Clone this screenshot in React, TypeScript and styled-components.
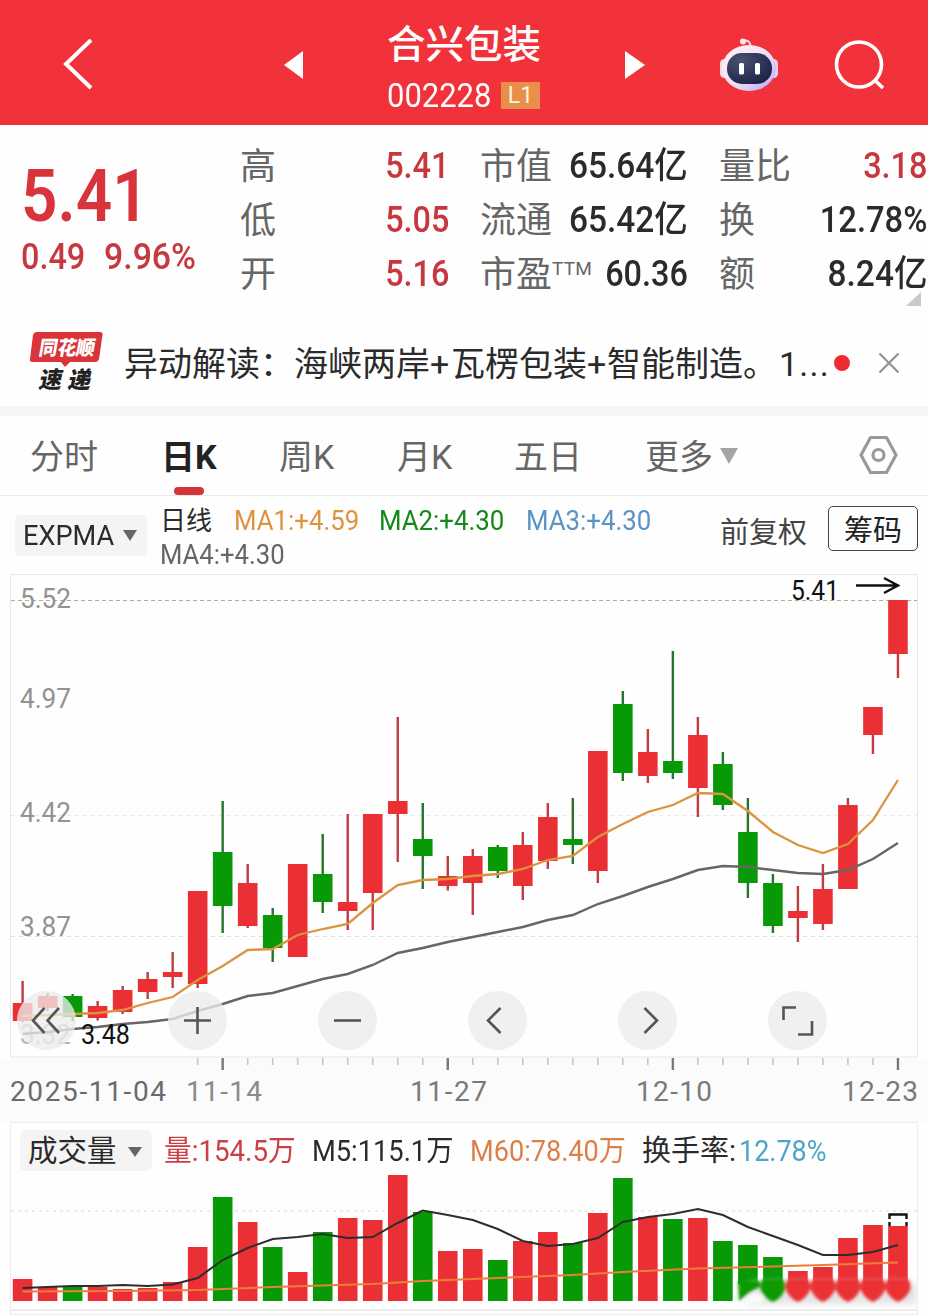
import React from 'react';
import styled, { createGlobalStyle } from 'styled-components';

const FONT = `Roboto, "Noto Sans CJK SC", sans-serif`;
const RED = '#ea3035';
const GREEN = '#079a06';

const Global = createGlobalStyle`
  * { box-sizing: border-box; }
  html, body { margin: 0; padding: 0; background: #fefefe; }
  body { font-family: ${FONT}; width: 928px; overflow: hidden; }
  svg { display: block; flex: none; }
`;

const Page = styled.main`
  width: 928px;
  height: 1315px;
  overflow: hidden;
  display: flex;
  flex-direction: column;
  background: #fefefe;
`;

/* Text set slightly condensed, the way the quote digits are drawn. */
const Txt = styled.span<{ $size: number; $color?: string; $weight?: number; $sx?: number; $right?: boolean }>`
  display: inline-block;
  white-space: pre;
  font-size: ${p => p.$size}px;
  line-height: 1;
  font-weight: ${p => p.$weight ?? 400};
  color: ${p => p.$color ?? '#2b2b2b'};
  transform: scaleX(${p => p.$sx ?? 1});
  transform-origin: ${p => (p.$right ? 'right' : 'left')} center;
`;

/* ---------- header ---------- */
const Header = styled.header`
  height: 125px;
  flex: none;
  background: #f1323a;
  display: flex;
  align-items: center;
  padding: 5px 43px 0 62px;
`;
const TitleBlock = styled.div`
  width: 156px;
  flex: none;
  margin: 0 82px 0 83px;
  height: 92px;
  display: flex;
  flex-direction: column;
`;
const Name = styled.h1`
  margin: 0;
  font-size: 38.5px;
  line-height: 52px;
  font-weight: 500;
  color: #fff;
  white-space: nowrap;
  flex: none;
`;
const CodeRow = styled.div`
  display: flex;
  flex: none;
  align-items: center;
  height: 48px;
  width: 153px;
  justify-content: space-between;
`;
const CodeBox = styled.div`
  width: 105px;
`;
const Level = styled.span`
  width: 39px;
  height: 27px;
  background: #e8904b;
  color: #fff3d8;
  font-size: 23px;
  line-height: 27px;
  text-align: center;
`;
const Spacer = styled.div<{ $w: number }>`
  width: ${p => p.$w}px;
  flex: none;
`;

/* ---------- quote ---------- */
const Quote = styled.section`
  height: 195px;
  flex: none;
  display: grid;
  grid-template-columns: 240px 209px 239px 239px;
  padding-top: 14px;
  position: relative;
`;
const PriceBlock = styled.div`
  padding: 21px 0 0 21px;
  display: flex;
  flex-direction: column;
  gap: 6px;
`;
const ChangeRow = styled.div`
  display: grid;
  grid-template-columns: 83px 100px;
`;
const Col = styled.div<{ $gap?: number }>`
  padding-left: ${p => p.$gap ?? 0}px;
`;
const Stat = styled.div`
  height: 54px;
  display: flex;
  align-items: center;
  justify-content: space-between;
`;
const Label = styled.span`
  padding-top: 2px;
  font-size: 36px;
  line-height: 52px;
  color: #666;
  font-weight: 400;
  white-space: nowrap;
  display: flex;
`;
const Ttm = styled.span`
  font-size: 19px;
  line-height: 40px;
  letter-spacing: 0.2px;
`;
const Corner = styled.div`
  position: absolute;
  right: 7px;
  top: 167px;
  border-left: 15px solid transparent;
  border-bottom: 14px solid #c9c9c9;
`;

/* ---------- news ---------- */
const News = styled.section`
  height: 86px;
  flex: none;
  display: flex;
  align-items: center;
  padding-left: 28px;
`;
const NewsText = styled.div`
  width: 708px;
  margin-left: 20px;
  padding-top: 1px;
  font-size: 34px;
  line-height: 48px;
  color: #2b2b2b;
  white-space: nowrap;
  display: flex;
`;
const NewsPart = styled.span<{ $w: number; $ls?: number }>`
  width: ${p => p.$w}px;
  flex: none;
  letter-spacing: ${p => p.$ls ?? 0}px;
`;
const Dot = styled.i`
  width: 16px;
  height: 16px;
  border-radius: 50%;
  background: #ee2b32;
  margin: 0 28px 0 2px;
`;
const Band = styled.div`
  height: 10px;
  flex: none;
  background: #f6f6f6;
`;

/* ---------- tabs ---------- */
const Tabs = styled.nav`
  height: 80px;
  flex: none;
  display: flex;
  border-bottom: 1px solid #e9e9e9;
  padding-left: 30px;
`;
const Tab = styled.div<{ $w: number; $on?: boolean }>`
  width: ${p => p.$w}px;
  flex: none;
  font-size: 34px;
  line-height: 83px;
  color: ${p => (p.$on ? '#222' : '#666')};
  font-weight: ${p => (p.$on ? 700 : 400)};
  display: flex;
  position: relative;
`;
const Underline = styled.i`
  position: absolute;
  left: 13px;
  top: 71px;
  width: 30px;
  height: 8px;
  border-radius: 4px;
  background: #d5333a;
`;
const Triangle = styled.i<{ $s: number; $h: number; $color: string }>`
  border-left: ${p => p.$s}px solid transparent;
  border-right: ${p => p.$s}px solid transparent;
  border-top: ${p => p.$h}px solid ${p => p.$color};
`;
const TabTriangle = styled(Triangle)`
  margin: 32px 0 0 7px;
  align-self: flex-start;
`;
const GearWrap = styled.div`
  padding-top: 19px;
`;

/* ---------- indicators ---------- */
const Indicators = styled.section`
  height: 78px;
  flex: none;
  display: flex;
  padding-left: 15px;
`;
const Picker = styled.div<{ $w: number; $h: number; $pad?: number }>`
  width: ${p => p.$w}px;
  height: ${p => p.$h}px;
  flex: none;
  border-radius: 5px;
  background: #f4f4f4;
  display: flex;
  align-items: center;
  justify-content: space-between;
  padding: ${p => p.$pad ?? 0}px 10px 0 8px;
`;
const PickerSlot = styled.div`
  padding-top: 19px;
  width: 145px;
`;
const MaLines = styled.div`
  width: 560px;
  padding-top: 8px;
`;
const MaRow = styled.div`
  height: 34px;
  display: grid;
  grid-template-columns: 74px 145px 147px 150px;
  align-items: center;
`;
const Adjust = styled.div`
  width: 108px;
  padding-top: 14px;
  font-size: 29px;
  line-height: 46px;
  color: #444;
  white-space: nowrap;
`;
const ChipsButton = styled.div`
  width: 90px;
  height: 45px;
  margin-top: 10px;
  border: 1px solid #444;
  border-radius: 5px;
  font-size: 29px;
  line-height: 48px;
  text-align: center;
  color: #222;
`;

/* ---------- charts ---------- */
const ChartArea = styled.section`
  position: relative;
  flex: none;
  height: 548px;
`;
const RoundButton = styled.div<{ $x: number }>`
  position: absolute;
  left: ${p => p.$x - 29.5}px;
  top: 417px;
  width: 59px;
  height: 59px;
  border-radius: 50%;
  background: rgba(236, 236, 236, 0.78);
`;
const VolumePanel = styled.section`
  height: 188px;
  flex: none;
  margin: 0 10px;
  border: 1px solid #ececec;
`;
const VolumeHead = styled.div`
  height: 52px;
  padding: 7px 0 0 9px;
  display: flex;
`;
const VolumeValues = styled.div`
  display: grid;
  grid-template-columns: 148px 158px 172px 97px 100px;
  height: 43px;
  align-items: center;
  padding-left: 12px;
`;
const NextPanel = styled.div`
  height: 8px;
  margin: 0 10px;
  border: 1px solid #ececec;
`;

const X0 = 22.6;
const STEP = 25.01;
const cx = (i: number) => X0 + STEP * i;

/* rise flag, body top, body bottom, high, low */
const candles: [number, number, number, number, number][] = [
  [1, 1003, 1021, 981, 1022], [1, 996, 1008, 993, 1011], [0, 996, 1017, 994, 1021], [1, 1006, 1018, 1001, 1020.5],
  [1, 990, 1012, 986, 1014], [1, 979, 992, 972, 999], [1, 972, 977, 952, 988], [1, 891, 984, 891, 988],
  [0, 852, 906, 801, 933], [1, 883, 926, 864, 928], [0, 915, 948, 908, 962], [1, 864, 957, 864, 957],
  [0, 874, 902, 834, 913], [1, 902, 911, 814, 930], [1, 814, 893, 814, 930], [1, 801, 814, 717, 862],
  [0, 839, 856, 803, 889], [1, 876, 886, 856, 890.5], [1, 856, 883, 849, 915], [0, 847, 871, 845, 878],
  [1, 845, 886, 832, 900], [1, 817, 861, 803, 869], [0, 839, 845, 798, 864], [1, 751, 871, 751, 883],
  [0, 704, 773, 691, 781], [1, 752, 776, 729, 783], [0, 761, 773, 651, 779], [1, 735, 788, 717, 817],
  [0, 764, 805, 752, 810], [0, 832, 883, 798, 898], [0, 883, 926, 874, 933], [1, 911, 918, 886, 942],
  [1, 889, 924, 864, 930], [1, 805, 889, 798, 889], [1, 707, 735, 707, 754], [1, 600, 654, 600, 678],
];
const fast = [1016, 1015, 1014, 1013, 1010, 1003, 997, 980, 966, 950, 949, 935, 929, 924, 903, 885, 880, 879, 876, 874, 869, 860, 856, 837, 824, 812, 805, 793, 794, 811, 832, 845, 853, 844, 820, 780];
const slow = [1034, 1032, 1029, 1027, 1024, 1022, 1019, 1011, 1004, 996, 993, 986, 979, 974, 965, 953, 948, 942, 937, 932, 927, 920, 915, 904, 896, 887, 879, 870, 866, 867, 870, 873, 874, 870, 859, 843];
const volumes = [1279, 1287, 1287, 1287, 1289, 1288, 1282, 1247, 1197, 1222, 1247, 1272, 1232, 1218, 1220, 1175, 1212, 1251, 1249, 1260, 1241, 1232, 1243, 1213, 1178, 1217, 1219, 1218, 1241, 1245, 1257, 1271, 1267, 1238, 1225, 1226];
const m5 = [1288, 1287, 1286, 1286, 1285, 1286, 1284.5, 1278, 1260, 1248, 1239, 1237, 1234, 1238, 1237, 1223, 1210.5, 1215, 1220, 1229, 1241, 1246, 1244, 1238, 1222, 1217, 1214, 1209, 1215, 1227, 1236, 1245, 1255, 1255, 1252, 1245];
const m60: [number, number][] = [[0, 1291.5], [4, 1291], [7, 1290], [10, 1287], [14, 1284], [16, 1281], [18, 1279], [22, 1275], [24, 1272], [27, 1268.5], [32, 1265], [35, 1262.5]];

const line = (ys: number[]) => ys.map((y, i) => `${cx(i)},${y}`).join(' ');

const priceTicks: [string, number, string][] = [
  ['5.52', 608, '#929292'], ['4.97', 708, '#929292'], ['4.42', 822, '#929292'], ['3.87', 936, '#929292'], ['3.32', 1044, '#b4b4b4'],
];
const dateTicks: [string, number, number, string][] = [
  ['2025-11-04', 10, 156, '#6b6b6b'], ['11-14', 186, 76, '#8a8a8a'], ['11-27', 410, 77, '#7a7a7a'],
  ['12-10', 636, 76, '#7a7a7a'], ['12-23', 842, 76, '#7a7a7a'],
];

const KLine = () => (
  <svg width="928" height="548" viewBox="0 574 928 548" fontFamily={FONT}>
    <rect x="0" y="1058" width="928" height="64" fill="#fbfbfb" />
    <path d="M10.5 1057V574.5H917.5V1057Z" fill="#fefefe" stroke="#e6e6e6" />
    <g stroke="#dedede" strokeDasharray="4 4">
      <path d="M11 815.5H917" stroke="#ebebeb" />
      <path d="M11 936.5H917" />
    </g>
    <path d="M11 600.5H917" stroke="#b3ad8a" strokeDasharray="4 3" />
    {priceTicks.map(([t, y, c]) => (
      <text key={t} x="20" y={y} fontSize="28" fill={c} textLength="51" lengthAdjust="spacingAndGlyphs">{t}</text>
    ))}
    {candles.map(([up, a, b, h, l], i) => (
      <g key={i}>
        <rect x={cx(i) - 1.2} y={h} width="2.4" height={l - h} fill={up ? '#bf3c40' : '#25762a'} />
        <rect x={cx(i) - 9.8} y={a} width="19.6" height={b - a} fill={up ? RED : GREEN} />
      </g>
    ))}
    <polyline points={line(slow)} fill="none" stroke="#666" strokeWidth="2.4" />
    <polyline points={line(fast)} fill="none" stroke="#dd923f" strokeWidth="2.3" />
    <text x="81" y="1044" fontSize="27" fill="#111" textLength="49" lengthAdjust="spacingAndGlyphs">3.48</text>
    <text x="791" y="600" fontSize="27" fill="#111" textLength="48" lengthAdjust="spacingAndGlyphs">5.41</text>
    <path d="M856 585.5H897M884 578L898 585.5L884 593" fill="none" stroke="#111" strokeWidth="2.4" />
    {Array.from({ length: 29 }, (_, k) => k + 7).map(i => {
      const major = i === 8 || i === 17 || i === 26 || i === 35;
      return <path key={i} d={`M${cx(i)} 1058V${major ? 1070 : 1065}`} stroke={major ? '#777' : '#c6c6c6'} strokeWidth={major ? 2.4 : 1.6} />;
    })}
    {dateTicks.map(([t, x, w, c]) => (
      <text key={t} x={x} y="1101" fontSize="28" fill={c} textLength={w} lengthAdjust="spacing">{t}</text>
    ))}
  </svg>
);

const controls: [number, string][] = [
  [46.5, 'M27.5 17L16 29.5L27.5 42M42 17L30.5 29.5L42 42'],
  [197.5, 'M16 29.5H43M29.5 16V43'],
  [347.5, 'M16 29.5H43'],
  [497.5, 'M32.5 17L20 29.5L32.5 42'],
  [647.5, 'M26.5 17L39 29.5L26.5 42'],
  [797.5, 'M15.5 29V16.5H28M44 30V43.5H30'],
];

const VolumeChart = () => (
  <svg width="906" height="134" viewBox="11 1175 906 134">
    <defs>
      <filter id="soft" x="-20%" y="-60%" width="140%" height="220%"><feGaussianBlur stdDeviation="3" /></filter>
      <filter id="softer" x="-20%" y="-60%" width="140%" height="220%"><feGaussianBlur stdDeviation="1.6" /></filter>
    </defs>
    <path d="M11 1211H917" stroke="#dcdcdc" strokeDasharray="3 4" />
    {volumes.map((y, i) => (
      <rect key={i} x={cx(i) - 9.8} y={y} width="19.6" height={(i > 28 ? 1284 : 1301) - y} fill={candles[i][0] ? RED : GREEN} />
    ))}
    <path d="M742 1292Q746 1284 756 1282H916V1304H750Q742 1302 742 1292Z" fill="#e4e4e4" filter="url(#soft)" />
    <g filter="url(#softer)">
      <path d="M738 1281H760V1287Q752 1290 744 1297L739 1301Z" fill={GREEN} />
      {[30, 31, 32, 33, 34, 35].map(i => (
        <path key={i} d={`M${cx(i) - 10} 1279H${cx(i) + 10}L${cx(i) + 12.5} 1284V1289Q${cx(i) + 9} 1298 ${cx(i)} 1302Q${cx(i) - 9} 1298 ${cx(i) - 12.5} 1289V1284Z`} fill={candles[i][0] ? RED : GREEN} />
      ))}
      <path d="M743 1302Q752 1287 764 1298L759 1304H746Z" fill="#fafafa" />
    </g>
    <polyline points={m60.map(([i, y]) => `${cx(i)},${y}`).join(' ')} fill="none" stroke="#ee7d3c" strokeWidth="2" />
    <polyline points={line(m5)} fill="none" stroke="#2d2d2d" strokeWidth="2" />
    <path d="M889.5 1219V1214.5H906.5V1219M889.5 1222V1226M906.5 1222V1226" fill="none" stroke="#111" strokeWidth="2.4" />
  </svg>
);

const Robot = () => (
  <svg width="60" height="56" viewBox="0 0 60 56">
    <defs>
      <linearGradient id="shell" x1="0" y1="0" x2="1" y2="1">
        <stop offset="0" stopColor="#fff2f5" />
        <stop offset="0.55" stopColor="#f3def4" />
        <stop offset="1" stopColor="#a9a4f5" />
      </linearGradient>
      <radialGradient id="visor" cx="0.3" cy="0.25" r="0.9">
        <stop offset="0" stopColor="#49506f" />
        <stop offset="1" stopColor="#182046" />
      </radialGradient>
    </defs>
    <path d="M23 4.500Q31 1 32 11" fill="none" stroke="#f7d9dc" strokeWidth="2" />
    <circle cx="24" cy="4.500" r="3" fill="#fde8e8" />
    <rect x="1" y="22" width="9" height="19" rx="4.5" fill="#f6dce7" />
    <rect x="50" y="22" width="9" height="19" rx="4.5" fill="#e5cdf3" />
    <ellipse cx="30" cy="31" rx="27" ry="23" fill="url(#shell)" />
    <rect x="8" y="16" width="45" height="31" rx="15" fill="url(#visor)" />
    <rect x="20" y="26" width="5" height="11.5" rx="1.5" fill="#fff" />
    <rect x="36" y="26" width="5" height="11.5" rx="1.5" fill="#fff" />
  </svg>
);

const Logo = () => (
  <svg width="76" height="62" viewBox="0 0 76 62" fontFamily={FONT} fontWeight="900">
    <path d="M9 0H72Q75 0 74.5 3L71 27Q70 30 67 30H42L37 35L33 30H5Q1 30 2 27L5 3Q6 0 9 0Z" fill="#d8343a" />
    <text x="0" y="0" transform="translate(10 23) skewX(-10)" fontSize="20" fill="#fff" textLength="56" lengthAdjust="spacingAndGlyphs">同花顺</text>
    <text x="0" y="0" transform="translate(10 56) skewX(-12)" fontSize="23" fill="#222" textLength="52">速递</text>
  </svg>
);

const App = () => (
  <Page>
    <Global />
    <Header>
      <svg width="32" height="52" viewBox="0 0 32 52"><path d="M29 1L4 25L29 49" fill="none" stroke="#fff" strokeWidth="4" /></svg>
      <Spacer $w={190} />
      <svg width="20" height="28" viewBox="0 0 20 28"><path d="M19 0V28L0 14Z" fill="#fff" /></svg>
      <TitleBlock>
        <Name>合兴包装</Name>
        <CodeRow>
          <CodeBox><Txt $size={34} $color="#fff" $sx={0.91} $weight={450}>002228</Txt></CodeBox>
          <Level>L1</Level>
        </CodeRow>
      </TitleBlock>
      <svg width="20" height="28" viewBox="0 0 20 28"><path d="M0 0V28L20 14Z" fill="#fff" /></svg>
      <Spacer $w={74} />
      <Robot />
      <Spacer $w={54} />
      <svg width="52" height="52" viewBox="0 0 52 52" fill="none" stroke="#fff" strokeWidth="3.6"><circle cx="26" cy="25.5" r="22.5" /><path d="M41.5 41L50 49" /></svg>
    </Header>

    <Quote>
      <PriceBlock>
        <Txt $size={73} $color="#d9343b" $weight={600} $sx={0.875}>5.41</Txt>
        <ChangeRow>
          <Txt $size={36} $color="#c5393f" $sx={0.9} $weight={500}>0.49</Txt>
          <Txt $size={36} $color="#c5393f" $sx={0.94} $weight={500}>9.96%</Txt>
        </ChangeRow>
      </PriceBlock>
      <Col>
        {[['高', '5.41'], ['低', '5.05'], ['开', '5.16']].map(([l, v]) => (
          <Stat key={l}><Label>{l}</Label><Txt $size={36} $color="#c8373d" $weight={500} $sx={0.9} $right>{v}</Txt></Stat>
        ))}
      </Col>
      <Col $gap={31}>
        <Stat><Label>市值</Label><Txt $size={36} $weight={500} $sx={0.93} $right>65.64亿</Txt></Stat>
        <Stat><Label>流通</Label><Txt $size={36} $weight={500} $sx={0.93} $right>65.42亿</Txt></Stat>
        <Stat><Label>市盈<Ttm>TTM</Ttm></Label><Txt $size={36} $weight={500} $sx={0.9} $right>60.36</Txt></Stat>
      </Col>
      <Col $gap={31}>
        <Stat><Label>量比</Label><Txt $size={36} $color="#c8373d" $weight={500} $sx={0.9} $right>3.18</Txt></Stat>
        <Stat><Label>换</Label><Txt $size={36} $weight={500} $sx={0.91} $right>12.78%</Txt></Stat>
        <Stat><Label>额</Label><Txt $size={36} $weight={500} $sx={0.93} $right>8.24亿</Txt></Stat>
      </Col>
      <Corner />
    </Quote>

    <News>
      <Logo />
      <NewsText>
        <NewsPart $w={170}>异动解读：</NewsPart>
        <NewsPart $w={157}>海峡两岸+</NewsPart>
        <NewsPart $w={156}>瓦楞包装+</NewsPart>
        <NewsPart $w={172}>智能制造。</NewsPart>
        <NewsPart $w={53} $ls={1.2}>1...</NewsPart>
      </NewsText>
      <Dot />
      <svg width="22" height="22" viewBox="0 0 22 22"><path d="M1.5 1.5L20.5 20.5M20.5 1.5L1.5 20.5" stroke="#929292" strokeWidth="2.2" /></svg>
    </News>
    <Band />

    <Tabs>
      <Tab $w={131}>分时</Tab>
      <Tab $w={118} $on>日K<Underline /></Tab>
      <Tab $w={118}>周K</Tab>
      <Tab $w={117}>月K</Tab>
      <Tab $w={131}>五日</Tab>
      <Tab $w={213}>更多<TabTriangle $s={9} $h={16} $color="#a5a5a5" /></Tab>
      <GearWrap>
        <svg width="41" height="40" viewBox="0 0 41 40" fill="none" stroke="#999" strokeWidth="3.2">
          <path d="M12.5 2.5H28.5L38 20L28.5 37.5H12.5L3 20Z" strokeLinejoin="round" /><circle cx="20.5" cy="20" r="5.5" />
        </svg>
      </GearWrap>
    </Tabs>

    <Indicators>
      <PickerSlot>
        <Picker $w={132} $h={41}>
          <Txt $size={28} $sx={0.97}>EXPMA</Txt>
          <Triangle $s={7.5} $h={11} $color="#666" />
        </Picker>
      </PickerSlot>
      <MaLines>
        <MaRow>
          <Txt $size={26}>日线</Txt>
          <Txt $size={27} $color="#dd923f" $sx={0.955}>MA1:+4.59</Txt>
          <Txt $size={27} $color="#14881a" $sx={0.955}>MA2:+4.30</Txt>
          <Txt $size={27} $color="#5a93c4" $sx={0.955}>MA3:+4.30</Txt>
        </MaRow>
        <MaRow><Txt $size={27} $color="#666" $sx={0.95}>MA4:+4.30</Txt></MaRow>
      </MaLines>
      <Adjust>前复权</Adjust>
      <ChipsButton>筹码</ChipsButton>
    </Indicators>

    <ChartArea>
      <KLine />
      {controls.map(([x, d]) => (
        <RoundButton key={x} $x={x}>
          <svg width="59" height="59" viewBox="0 0 59 59"><path d={d} fill="none" stroke="#555" strokeWidth="2.6" /></svg>
        </RoundButton>
      ))}
    </ChartArea>

    <VolumePanel>
      <VolumeHead>
        <Picker $w={132} $h={41} $pad={3}>
          <Txt $size={29.5}>成交量</Txt>
          <Triangle $s={7.5} $h={10} $color="#666" />
        </Picker>
        <VolumeValues>
          <Txt $size={29} $color="#cb3e43" $sx={0.955}>量:154.5万</Txt>
          <Txt $size={29} $sx={0.94}>M5:115.1万</Txt>
          <Txt $size={29} $color="#dc8048" $sx={0.935}>M60:78.40万</Txt>
          <Txt $size={29}>换手率:</Txt>
          <Txt $size={29} $color="#4ba5c9" $sx={0.93}>12.78%</Txt>
        </VolumeValues>
      </VolumeHead>
      <VolumeChart />
    </VolumePanel>
    <NextPanel />
  </Page>
);

export default App;
